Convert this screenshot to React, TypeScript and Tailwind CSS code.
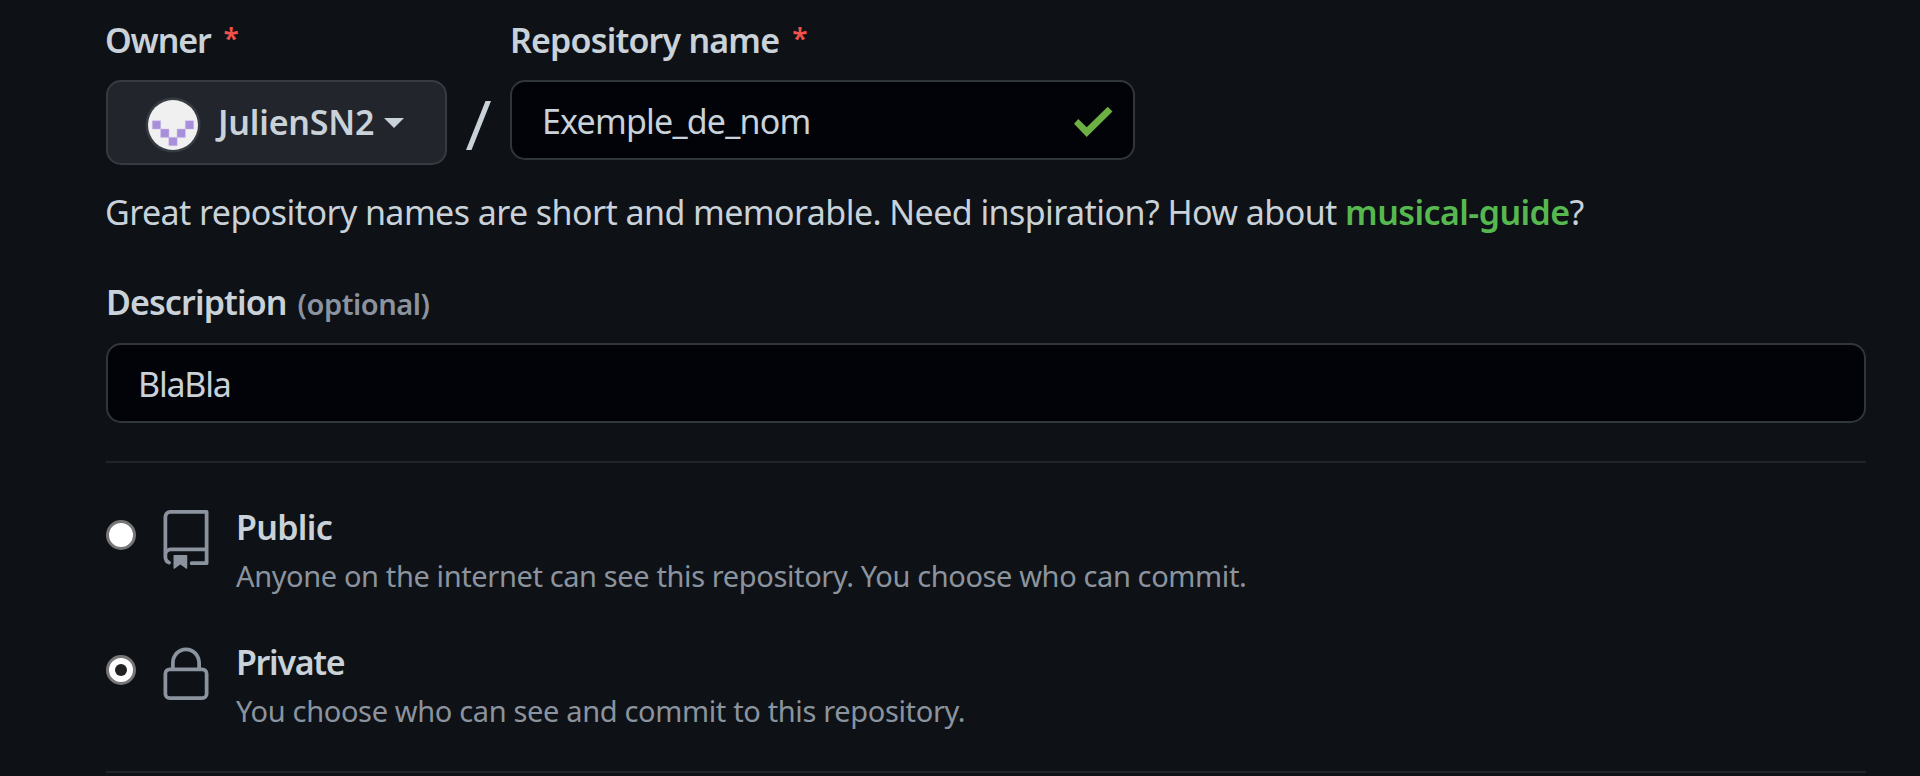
import type { ReactNode } from "react";

function Label({ children, spacing }: { children: ReactNode; spacing: string }) {
  return <span className={`text-[34px] font-semibold ${spacing}`}>{children}</span>;
}

function Required() {
  return <span className="-mt-[2px] ml-[13px] text-[28px] font-semibold text-[#f0524a]">*</span>;
}

function Radio({ checked }: { checked?: boolean }) {
  return (
    <span className="mt-[20px] flex size-[30px] shrink-0 items-center justify-center rounded-full border-[3px] border-[#767676] bg-white">
      {checked && <span className="size-[12px] rounded-full bg-[#212121]" />}
    </span>
  );
}

function RepoIcon() {
  return (
    <svg className="mt-[10px] ml-[20px] size-[60px] shrink-0 fill-[#8b949e]" viewBox="0 0 24 24">
      <path
        fillRule="evenodd"
        d="M3 2.75A2.75 2.75 0 015.75 0h14.5a.75.75 0 01.75.75v20.5a.75.75 0 01-.75.75h-6a.75.75 0 010-1.5h5.25v-4H6A1.5 1.5 0 004.5 18v.75c0 .716.43 1.334 1.05 1.605a.75.75 0 01-.6 1.374A3.25 3.25 0 013 18.75v-16zM19.5 1.5V15H6c-.546 0-1.059.146-1.5.401V2.75c0-.69.56-1.25 1.25-1.25H19.5z"
      />
      <path d="M7 18.25a.25.25 0 01.25-.25h5a.25.25 0 01.25.25v5.01a.25.25 0 01-.397.201l-2.206-1.604a.25.25 0 00-.294 0L7.397 23.46a.25.25 0 01-.397-.2v-5.01z" />
    </svg>
  );
}

function LockIcon() {
  return (
    <svg className="mt-[10px] ml-[20px] size-[60px] shrink-0 fill-[#8b949e]" viewBox="0 0 24 24">
      <path
        fillRule="evenodd"
        d="M6 9V7.25C6 3.845 8.503 1 12 1s6 2.845 6 6.25V9h.5a2.5 2.5 0 012.5 2.5v8a2.5 2.5 0 01-2.5 2.5h-13A2.5 2.5 0 013 19.5v-8A2.5 2.5 0 015.5 9H6zm1.5-1.75C7.5 4.58 9.422 2.5 12 2.5c2.578 0 4.5 2.08 4.5 4.75V9h-9V7.25zm-3 4.25a1 1 0 011-1h13a1 1 0 011 1v8a1 1 0 01-1 1h-13a1 1 0 01-1-1v-8z"
      />
    </svg>
  );
}

function Avatar() {
  return (
    <svg className="size-[56px]" viewBox="0 0 56 56">
      <circle cx="28" cy="28" r="27.5" fill="#373b42" />
      <circle cx="28" cy="28" r="25" fill="#f0f0f0" />
      <path
        fill="#a78fdc"
        stroke="#cfc1ea"
        strokeWidth="0.5"
        d="M7.300 23.700h8.400v8.400h-8.400zM40.300 23.700h8.400v8.400h-8.400zM15.600 32h8.400v8.400h-8.400zM32 32h8.400v8.400h-8.400zM23.800 40.300h8.400v8.400h-8.400z"
      />
    </svg>
  );
}

export default function App() {
  return (
    <main className="h-[776px] w-[1920px] overflow-hidden bg-[#0e1116] pl-[106px] font-['Noto_Sans',sans-serif] leading-[52px] whitespace-nowrap text-[#c9d1d9]">
      <div className="flex h-[186px] pt-[14px]">
        <div className="w-[341px]">
          <div className="flex h-[66px]">
            <Label spacing="-ml-[1px] tracking-[-1.15px]">Owner</Label>
            <Required />
          </div>
          <button className="flex h-[85px] w-[341px] items-center rounded-[15px] border-2 border-[#363b42] bg-[#22252c] pl-[37px]">
            <span className="mt-[5px] flex">
              <Avatar />
            </span>
            <span className="-mt-[2px] ml-[17px] text-[34px] font-semibold tracking-[-0.2px]">JulienSN2</span>
            <span className="ml-[10px] border-x-10 border-t-10 border-x-transparent border-t-[#c9d1d9]" />
          </button>
        </div>
        <svg className="mt-[87px] ml-[18px] h-[49px] w-[27px]" viewBox="0 0 27 49">
          <path d="M20.500 0H26L6.500 49H1z" fill="#c9d1d9" />
        </svg>
        <div className="ml-[18px] w-[625px]">
          <div className="flex h-[66px]">
            <Label spacing="tracking-[-0.82px]">Repository name</Label>
            <Required />
          </div>
          <div className="flex h-[80px] items-center justify-between rounded-[15px] border-2 border-[#30363b] bg-[#010308] pr-[20px] pl-[30px]">
            <span className="mt-[2px] text-[34px] tracking-[-0.8px]">Exemple_de_nom</span>
            <svg className="mt-[3px] h-[31px] w-[39px]" viewBox="0 0 39 31">
              <path d="M0 17.700L4.300 13L12.700 21.300L33.700 .7L38.500 5.500L12.700 31z" fill="#6cb044" />
            </svg>
          </div>
        </div>
      </div>
      <p className="-ml-[1px] text-[34px] tracking-[-0.57px]">
        Great repository names are short and memorable. Need inspiration? How about{" "}
        <b className="font-semibold text-[#56b84f]">musical-guide</b>?
      </p>
      <div className="mt-[38px] flex h-[67px]">
        <Label spacing="tracking-[-0.89px]">Description</Label>
        <span className="mt-[2px] ml-[11px] text-[29px] font-semibold tracking-[-0.45px] text-[#8b949e]">(optional)</span>
      </div>
      <div className="flex h-[80px] w-[1760px] items-center rounded-[15px] border-2 border-[#30363b] bg-[#010308] pl-[30px]">
        <span className="mt-[2px] text-[34px] tracking-[-1.2px]">BlaBla</span>
      </div>
      <hr className="mt-[38px] h-[2px] w-[1760px] border-0 bg-[#21252b]" />
      <div className="mt-[37px] flex h-[135px]">
        <Radio />
        <RepoIcon />
        <div className="mt-[1px] ml-[20px]">
          <div className="h-[49px]">
            <Label spacing="tracking-[-0.7px]">Public</Label>
          </div>
          <div className="text-[29px] tracking-[-0.38px] text-[#8b949e]">
            Anyone on the internet can see this repository. You choose who can commit.
          </div>
        </div>
      </div>
      <div className="flex h-[136px]">
        <Radio checked />
        <LockIcon />
        <div className="mt-[1px] ml-[20px]">
          <div className="h-[49px]">
            <Label spacing="tracking-[-1.3px]">Private</Label>
          </div>
          <div className="text-[29px] tracking-[-0.35px] text-[#8b949e]">
            You choose who can see and commit to this repository.
          </div>
        </div>
      </div>
      <hr className="h-[2px] w-[1760px] border-0 bg-[#21252b]" />
    </main>
  );
}
